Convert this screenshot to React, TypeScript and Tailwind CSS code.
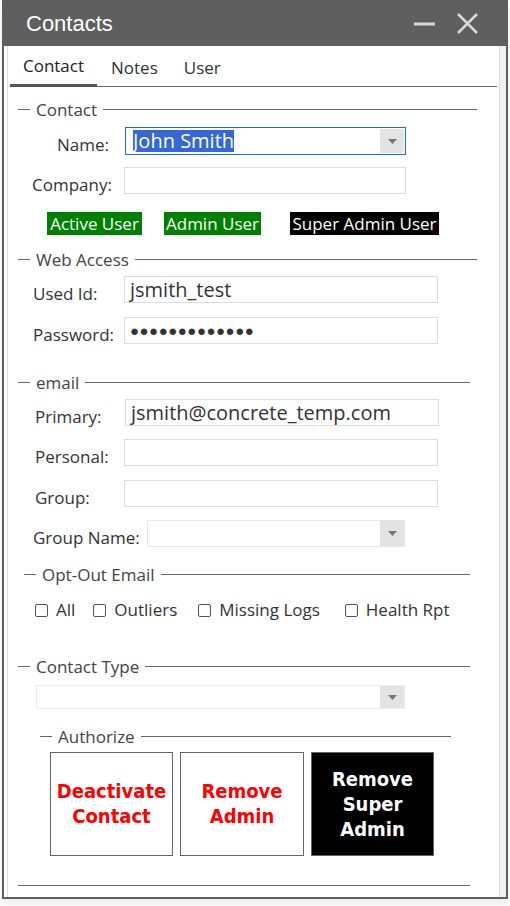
import React from 'react';

const ui = "font-['Open_Sans','Noto_Sans',sans-serif]";

function Legend({ text, lead, end, className = '' }: { text: string; lead: number; end: number; className?: string }) {
    return (
        <div className={`flex items-center h-[20px] text-[17px] text-[#444] ${className}`} style={{ marginLeft: lead, width: end - lead }}>
            <span className="w-[12px] h-px bg-[#666]"></span>
            <span className="px-[6px] leading-none">{text}</span>
            <span className="flex-1 h-px bg-[#666]"></span>
        </div>
    );
}

function DropArrow() {
    return (
        <div className="w-[24px] self-stretch bg-[#e3e3e3] flex items-center justify-center">
            <svg width="9" height="5" viewBox="0 0 9 5">
                <path d="M0 0 H9 L4.5 5 Z" fill="#777" />
            </svg>
        </div>
    );
}

function Box() {
    return <span className="inline-block w-[13px] h-[13px] border border-[#555] rounded-[2px] bg-white"></span>;
}

function Label({ text, ml, w }: { text: string; ml: number; w: number }) {
    return (
        <span className="text-[17px] leading-[18px] text-[#333] pt-[8px] whitespace-nowrap" style={{ marginLeft: ml, width: w }}>
            {text}
        </span>
    );
}

export default function App() {
    return (
        <div className={`min-h-screen bg-white ${ui}`}>
            <div className="ml-[2px] w-[506px] border-x-2 border-b-2 border-[#5f5f5f] shadow-[0_6px_10px_rgba(0,0,0,0.08)]">
                {/* Title bar */}
                <div className="h-[46px] bg-[#5f5f5f] flex items-center pl-[22px] pr-[28px]">
                    <span className="font-['Liberation_Sans',Arial,sans-serif] text-[22px] text-white">Contacts</span>
                    <div className="ml-auto flex items-center gap-[22px]">
                        <svg width="21" height="21" viewBox="0 0 21 21">
                            <path d="M0 11 H21" stroke="#d8d8d8" strokeWidth="3" />
                        </svg>
                        <svg width="21" height="21" viewBox="0 0 21 21">
                            <path d="M1 1 L20 20 M20 1 L1 20" stroke="#d8d8d8" strokeWidth="2.5" />
                        </svg>
                    </div>
                </div>

                {/* Body */}
                <div className="flex">
                    <div className="flex-1 ml-[3px] border-l border-r border-[#dedede] pb-[11px]">
                        {/* Tabs */}
                        <div className="mx-[2px] flex border-b border-[#666] h-[41px] text-[17px] text-[#333]">
                            <div className="w-[87px] border-b-[3px] border-[#555] -mb-px flex items-center justify-center pt-[2px] text-[#222]">Contact</div>
                            <div className="ml-[14px] flex items-center pt-[4px]">Notes</div>
                            <div className="ml-[26px] flex items-center pt-[4px]">User</div>
                        </div>

                        <Legend text="Contact" lead={10} end={469} className="mt-[12px]" />

                        <div className="flex items-center mt-[8px] h-[28px]">
                            <Label text="Name:" ml={49} w={68} />
                            <div className="w-[281px] h-[28px] border border-[#1a6fd6] flex items-center">
                                <div className="flex-1 pl-[7px] flex items-center">
                                    <span className="bg-[#3568d4] text-white text-[20px] leading-[22px]">John Smith</span>
                                </div>
                                <div className="h-[24px] mr-px flex"><DropArrow /></div>
                            </div>
                        </div>

                        <div className="flex items-center mt-[12px] h-[27px]">
                            <Label text="Company:" ml={24} w={92} />
                            <div className="w-[282px] h-[27px] border border-[#dcdcdc]"></div>
                        </div>

                        <div className="flex items-center mt-[18px] h-[23px] text-[17px] text-white leading-none">
                            <span className="ml-[39px] w-[95px] h-full bg-[#008000] flex items-center justify-center">Active User</span>
                            <span className="ml-[22px] w-[97px] h-full bg-[#008000] flex items-center justify-center">Admin User</span>
                            <span className="ml-[29px] w-[149px] h-full bg-black flex items-center justify-center">Super Admin User</span>
                        </div>

                        <Legend text="Web Access" lead={10} end={469} className="mt-[14px]" />

                        <div className="flex items-center mt-[7px] h-[27px]">
                            <Label text="Used Id:" ml={25} w={91} />
                            <div className="w-[314px] h-[27px] border border-[#dcdcdc] flex items-center pl-[5px] text-[20px] text-[#333]">jsmith_test</div>
                        </div>

                        <div className="flex items-center mt-[14px] h-[27px]">
                            <Label text="Password:" ml={25} w={91} />
                            <div className="w-[314px] h-[27px] border border-[#dcdcdc] flex items-center pl-[5px] text-[15px] tracking-[0.5px] text-[#333]">●●●●●●●●●●●●●</div>
                        </div>

                        <Legend text="email" lead={10} end={462} className="mt-[28px]" />

                        <div className="flex items-center mt-[7px] h-[27px]">
                            <Label text="Primary:" ml={27} w={90} />
                            <div className="w-[314px] h-[27px] border border-[#dcdcdc] flex items-center pl-[5px] text-[20px] text-[#333]">jsmith@concrete_temp.com</div>
                        </div>

                        <div className="flex items-center mt-[13px] h-[27px]">
                            <Label text="Personal:" ml={27} w={89} />
                            <div className="w-[314px] h-[27px] border border-[#dcdcdc]"></div>
                        </div>

                        <div className="flex items-center mt-[14px] h-[27px]">
                            <Label text="Group:" ml={27} w={89} />
                            <div className="w-[314px] h-[27px] border border-[#dcdcdc]"></div>
                        </div>

                        <div className="flex items-center mt-[13px] h-[27px]">
                            <Label text="Group Name:" ml={25} w={114} />
                            <div className="w-[258px] h-[27px] border border-[#e6e6e6] flex">
                                <div className="flex-1"></div>
                                <DropArrow />
                            </div>
                        </div>

                        <Legend text="Opt-Out Email" lead={16} end={462} className="mt-[17px]" />

                        <div className="flex items-center mt-[16px] h-[20px] text-[17px] text-[#333]">
                            <span className="ml-[27px] flex items-center gap-[8px]"><Box />All</span>
                            <span className="ml-[18px] flex items-center gap-[8px]"><Box />Outliers</span>
                            <span className="ml-[21px] flex items-center gap-[8px]"><Box />Missing Logs</span>
                            <span className="ml-[25px] flex items-center gap-[8px]"><Box />Health Rpt</span>
                        </div>

                        <Legend text="Contact Type" lead={10} end={462} className="mt-[36px]" />

                        <div className="ml-[28px] mt-[9px] w-[369px] h-[24px] border border-[#ececec] flex">
                            <div className="flex-1"></div>
                            <DropArrow />
                        </div>

                        <Legend text="Authorize" lead={32} end={443} className="mt-[17px]" />

                        <div className="flex mt-[6px] ml-[42px] gap-[7px] font-['DejaVu_Sans_Condensed','DejaVu_Sans',sans-serif] font-bold text-[20px] leading-[25px] text-center">
                            <div className="w-[123px] h-[104px] border border-[#666] flex items-center justify-center text-[#ff0000]">Deactivate<br />Contact</div>
                            <div className="w-[124px] h-[104px] border border-[#666] flex items-center justify-center text-[#ff0000]">Remove<br />Admin</div>
                            <div className="w-[123px] h-[104px] border border-[#666] bg-black flex items-center justify-center text-white">Remove<br />Super<br />Admin</div>
                        </div>

                        <div className="ml-[10px] mt-[29px] w-[452px] h-px bg-[#666]"></div>
                    </div>
                    {/* scrollbar track */}
                    <div className="w-[6px] bg-[#f0f0f0]"></div>
                </div>
            </div>
        </div>
    );
}
